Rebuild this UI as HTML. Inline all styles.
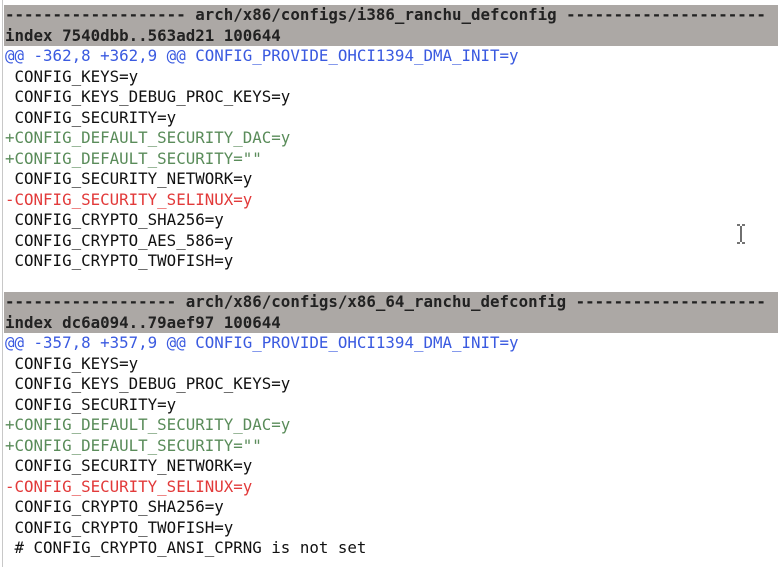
<!DOCTYPE html>
<html><head><style>
body{margin:0;width:780px;height:567px;background:#fff;position:relative;overflow:hidden;font-family:"DejaVu Sans Mono","Liberation Mono",monospace;font-size:15.8px;}
.vl{position:absolute;left:2px;top:0;width:1px;height:567px;background:#c8c8c8}
.l{position:absolute;left:5px;height:20.5px;line-height:20.5px;white-space:pre;color:#111}
.g{background:#aca8a5;font-weight:bold;color:#222;width:773px;left:4px;padding-left:1px;overflow:hidden}
.b{color:#3a5ae0}.gr{color:#5a8c5a}.r{color:#e23a3a}
</style></head><body>
<div class="vl"></div>
<div class="l g" style="top:5px">------------------- arch/x86/configs/i386_ranchu_defconfig ---------------------</div>
<div class="l g" style="top:25.5px">index 7540dbb..563ad21 100644</div>
<div class="l b" style="top:46px">@@ -362,8 +362,9 @@ CONFIG_PROVIDE_OHCI1394_DMA_INIT=y</div>
<div class="l" style="top:66.5px"> CONFIG_KEYS=y</div>
<div class="l" style="top:87px"> CONFIG_KEYS_DEBUG_PROC_KEYS=y</div>
<div class="l" style="top:107.5px"> CONFIG_SECURITY=y</div>
<div class="l gr" style="top:128px">+CONFIG_DEFAULT_SECURITY_DAC=y</div>
<div class="l gr" style="top:148.5px">+CONFIG_DEFAULT_SECURITY=""</div>
<div class="l" style="top:169px"> CONFIG_SECURITY_NETWORK=y</div>
<div class="l r" style="top:189.5px">-CONFIG_SECURITY_SELINUX=y</div>
<div class="l" style="top:210px"> CONFIG_CRYPTO_SHA256=y</div>
<div class="l" style="top:230.5px"> CONFIG_CRYPTO_AES_586=y</div>
<div class="l" style="top:251px"> CONFIG_CRYPTO_TWOFISH=y</div>
<div class="l g" style="top:292px">------------------ arch/x86/configs/x86_64_ranchu_defconfig --------------------</div>
<div class="l g" style="top:312.5px">index dc6a094..79aef97 100644</div>
<div class="l b" style="top:333px">@@ -357,8 +357,9 @@ CONFIG_PROVIDE_OHCI1394_DMA_INIT=y</div>
<div class="l" style="top:353.5px"> CONFIG_KEYS=y</div>
<div class="l" style="top:374px"> CONFIG_KEYS_DEBUG_PROC_KEYS=y</div>
<div class="l" style="top:394.5px"> CONFIG_SECURITY=y</div>
<div class="l gr" style="top:415px">+CONFIG_DEFAULT_SECURITY_DAC=y</div>
<div class="l gr" style="top:435.5px">+CONFIG_DEFAULT_SECURITY=""</div>
<div class="l" style="top:456px"> CONFIG_SECURITY_NETWORK=y</div>
<div class="l r" style="top:476.5px">-CONFIG_SECURITY_SELINUX=y</div>
<div class="l" style="top:497px"> CONFIG_CRYPTO_SHA256=y</div>
<div class="l" style="top:517.5px"> CONFIG_CRYPTO_TWOFISH=y</div>
<div class="l" style="top:538px"> # CONFIG_CRYPTO_ANSI_CPRNG is not set</div>
<svg style="position:absolute;left:735px;top:224px" width="12" height="20"><path d="M2 1h3M7 1h3M6 2v16M2 19h3M7 19h3" stroke="#222" stroke-width="1.3" fill="none"/></svg>
</body></html>
